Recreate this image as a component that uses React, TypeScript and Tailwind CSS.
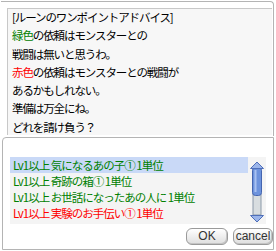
const jp = { fontFamily: '"Noto Sans CJK JP", "Noto Sans", sans-serif' };

const rows = [
  { text: "Lv1以上 気になるあの子① 1単位", color: "text-[#008000]", active: true },
  { text: "Lv1以上 奇跡の箱① 1単位", color: "text-[#008000]", active: false },
  { text: "Lv1以上 お世話になったあの人に 1単位", color: "text-[#008000]", active: false },
  { text: "Lv1以上 実験のお手伝い① 1単位", color: "text-[#ff0000]", active: false },
];

function ScrollBar() {
  return (
    <svg width="16" height="62" viewBox="0 0 16 62" className="absolute right-[1px] top-[4px]">
      <rect x="4" y="8" width="8" height="46" fill="#d8dde0" stroke="#8a98a8" strokeWidth="1" />
      <rect x="3.5" y="6.5" width="9" height="28" rx="3" fill="#6d93dd" stroke="#4565b0" />
      <rect x="5.5" y="9" width="2" height="22" fill="#a9c2f2" />
      <path d="M8 1 L14.5 7.5 H1.5 Z" fill="#9bb5ea" stroke="#4f6fba" strokeLinejoin="round" />
      <path d="M8 61 L14.5 54.5 H1.5 Z" fill="#9bb5ea" stroke="#4f6fba" strokeLinejoin="round" />
    </svg>
  );
}

function Btn({ label, w }: { label: string; w: string }) {
  return (
    <button
      className={`${w} h-[17px] rounded-[6px] border border-[#9a9a9a] bg-gradient-to-b from-white to-[#dedede] text-[12px] leading-[15px] text-[#333] shadow-[inset_-1px_-1px_0_#c4c4c4]`}
      style={{ fontFamily: '"Liberation Sans", Arial, sans-serif' }}
    >
      {label}
    </button>
  );
}

export default function App() {
  return (
    <div className="w-[276px] h-[251px] bg-white overflow-hidden" style={jp}>
      {/* message panel */}
      <div className="ml-[1px] mt-[1px] w-[273px] h-[135px] border-t border-r border-[#b4b4b4] rounded-tr-[4px] pl-[6px] pt-[6px]">
        <div className="w-[265px] h-[127px] bg-[#f7f7f7] border-l border-t border-[#c8c8c8] pl-[4px] text-[11.5px] tracking-[-1.1px] leading-[18.3px] text-black overflow-hidden">
          <div className="-mt-[1px]">
            <p>[ルーンのワンポイントアドバイス]</p>
            <p>
              <span className="text-[#008000]">緑色</span>の依頼はモンスターとの
            </p>
            <p>戦闘は無いと思うわ。</p>
            <p>
              <span className="text-[#ff0000]">赤色</span>の依頼はモンスターとの戦闘が
            </p>
            <p>あるかもしれない。</p>
            <p>準備は万全にね。</p>
            <p>どれを請け負う？</p>
          </div>
        </div>
      </div>

      {/* quest list panel */}
      <div className="ml-[2px] mt-[1px] w-[272px] h-[113px] border border-[#b4b4b4] rounded-tl-[4px] flex flex-col">
        <div className="relative ml-[7px] mt-[19px] w-[256px] h-[67px] bg-[#f4f4f4] pr-[18px]">
          {rows.map((r) => (
            <div
              key={r.text}
              className={`h-[16px] pl-[3px] text-[11.5px] tracking-[-1px] leading-[16px] whitespace-nowrap ${r.color} ${r.active ? "bg-[#c9d9f7]" : ""}`}
            >
              {r.text}
            </div>
          ))}
          <ScrollBar />
        </div>
        <div className="flex justify-end gap-[5px] mt-[4px]">
          <Btn label="OK" w="w-[42px]" />
          <Btn label="cancel" w="w-[40px]" />
        </div>
      </div>
    </div>
  );
}
